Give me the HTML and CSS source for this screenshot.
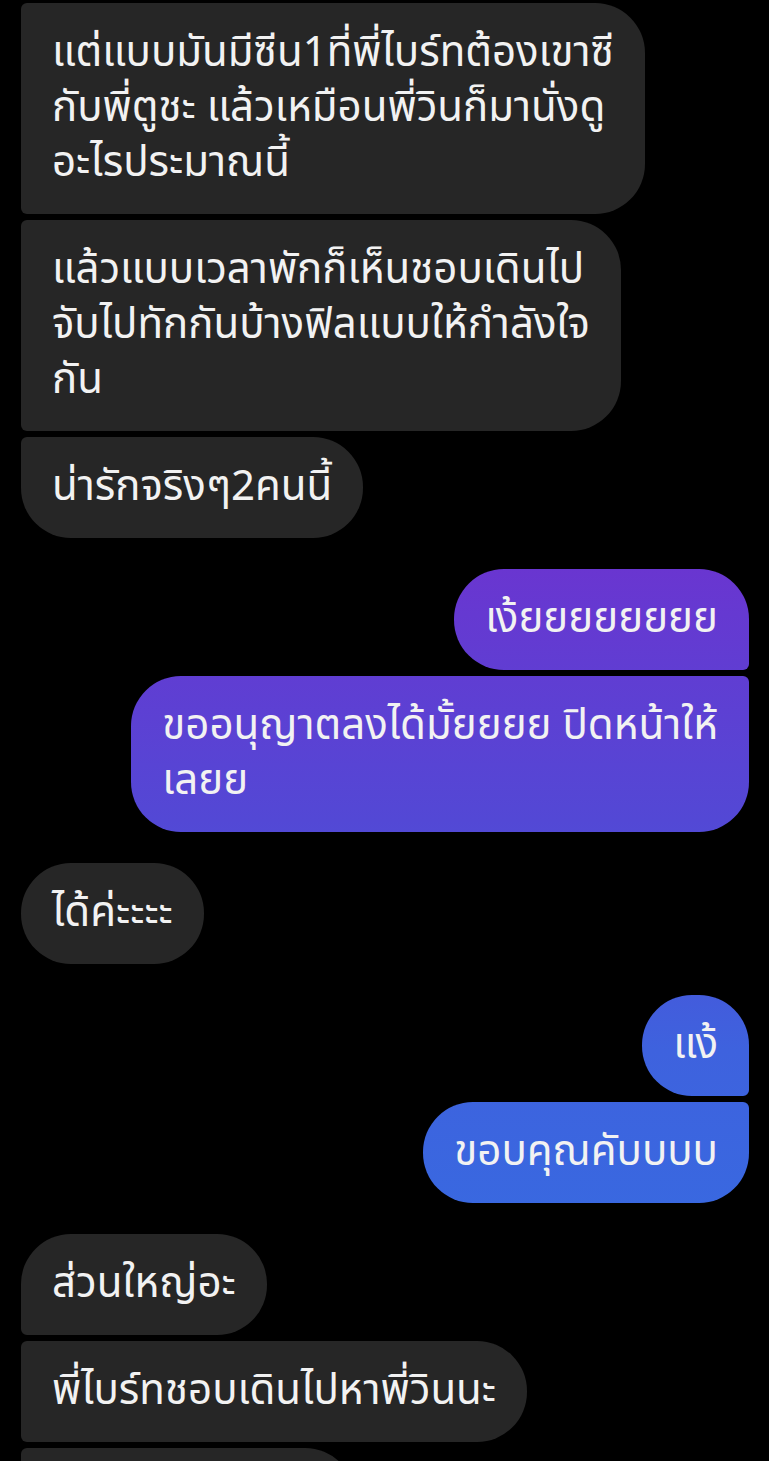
FILE: index.html
```html
<!DOCTYPE html>
<html lang="th">
<head>
    <meta charset="UTF-8">
    <meta name="viewport" content="width=device-width, initial-scale=1.0">
    <title>แชท</title>
    <link rel="stylesheet" href="styles.css">
</head>
<body>
    <div class="chat">
        <div class="group them">
            <div class="bubble mid">แต่แบบมันมีซีน1ที่พี่ไบร์ทต้องเขาซี<br>กับพี่ตูชะ แล้วเหมือนพี่วินก็มานั่งดู<br>อะไรประมาณนี้</div>
            <div class="bubble mid">แล้วแบบเวลาพักก็เห็นชอบเดินไป<br>จับไปทักกันบ้างฟิลแบบให้กำลังใจ<br>กัน</div>
            <div class="bubble last">น่ารักจริงๆ2คนนี้</div>
        </div>

        <div class="group me">
            <div class="bubble first">เง้ยยยยยยยย</div>
            <div class="bubble last">ขออนุญาตลงได้มั้ยยยย ปิดหน้าให้<br>เลยย</div>
        </div>

        <div class="group them">
            <div class="bubble">ได้ค่ะะะะ</div>
        </div>

        <div class="group me">
            <div class="bubble first">แง้</div>
            <div class="bubble last">ขอบคุณคับบบบ</div>
        </div>

        <div class="group them">
            <div class="bubble first">ส่วนใหญ่อะ</div>
            <div class="bubble mid">พี่ไบร์ทชอบเดินไปหาพี่วินนะ</div>
            <div class="bubble mid cut"></div>
        </div>
    </div>
</body>
</html>
```

FILE: styles.css
```css
html, body {
    margin: 0;
    background: #000;
}
body {
    font-family: "Noto Sans Thai", "Noto Sans", sans-serif;
    color: #f2f2f2;
    overflow: hidden;
    height: 1461px;
}
.chat {
    display: flex;
    flex-direction: column;
    gap: 31px;
    padding: 3px 20px 0 21px;
}
.group {
    display: flex;
    flex-direction: column;
    gap: 6px;
}
.them {
    align-items: flex-start;
}
.me {
    align-items: flex-end;
}
.bubble {
    font-size: 42px;
    line-height: 55px;
    min-height: 55px;
    padding: 23px 31px;
    white-space: nowrap;
    border-radius: 50px;
}
.them .bubble {
    background: #262626;
}
.me .bubble {
    background: linear-gradient(to bottom, #8a16c4 0px, #6a35d0 560px, #5348d5 820px, #3e62de 1050px, #3968e0 1210px, #2f72e3 1461px);
    background-attachment: fixed;
}
.them .first {
    border-bottom-left-radius: 6px;
}
.them .mid {
    border-top-left-radius: 6px;
    border-bottom-left-radius: 6px;
}
.them .last {
    border-top-left-radius: 6px;
}
.me .first {
    border-bottom-right-radius: 6px;
}
.me .last {
    border-top-right-radius: 6px;
}
.bubble.cut {
    width: 272px;
}
```
